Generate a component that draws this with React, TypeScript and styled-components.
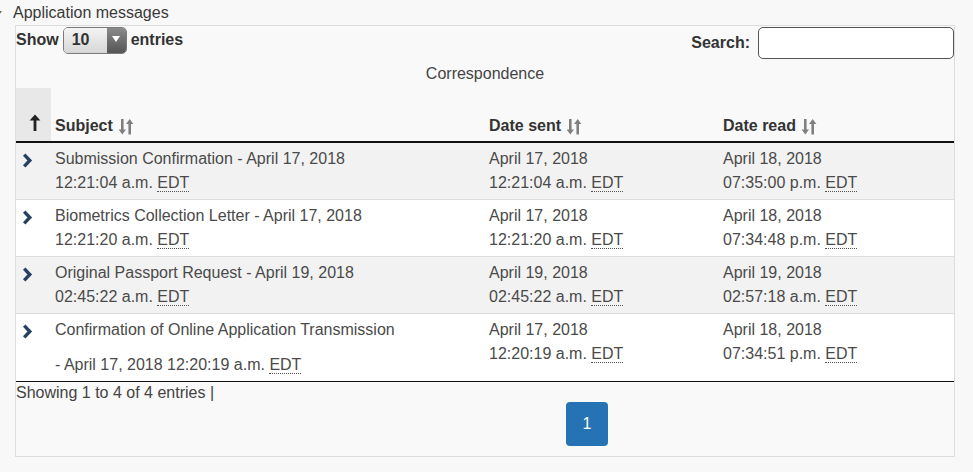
import styled, { createGlobalStyle } from 'styled-components';

const GlobalStyle = createGlobalStyle`
  body {
    margin: 0;
    background: #f8f8f8;
    font-family: 'Liberation Sans', Arial, sans-serif;
    color: #333;
  }
`;

const Legend = styled.div`
  position: relative;
  height: 25px;
  line-height: 26px;
  padding-left: 13px;
  font-size: 16px;
  color: #3a3a3a;

  &::before {
    content: '';
    position: absolute;
    left: -4px;
    top: 11px;
    border-left: 3px solid transparent;
    border-right: 3px solid transparent;
    border-top: 4px solid #666;
  }
`;

const Panel = styled.div`
  margin-left: 15px;
  width: 938px;
  border: 1px solid #ddd;
  background: #f9f9f9;
`;

const Toolbar = styled.div`
  display: flex;
  justify-content: space-between;
  align-items: flex-start;
  height: 36px;
`;

const Label = styled.label`
  display: flex;
  align-items: center;
  gap: 4px;
  font-weight: bold;
  font-size: 16px;
  color: #333;
`;

const ShowLabel = styled(Label)`
  height: 28px;
`;

const SearchLabel = styled(Label)`
  gap: 8px;
  margin-top: 1px;
`;

const Select = styled.div`
  display: flex;
  width: 64px;
  height: 27px;
  border: 1px solid #7a7a7a;
  border-radius: 5px;
  overflow: hidden;
  box-sizing: border-box;
`;

const SelectValue = styled.span`
  flex: 1;
  display: flex;
  align-items: center;
  padding-left: 8px;
  font-weight: bold;
  background: linear-gradient(#f4f4f4, #d6d6d6);
`;

const SelectArrow = styled.span`
  width: 19px;
  display: flex;
  align-items: center;
  justify-content: center;
  background: linear-gradient(#8a8a8a, #555);

  &::after {
    content: '';
    border-left: 4px solid transparent;
    border-right: 4px solid transparent;
    border-top: 6px solid #fff;
    margin-top: -2px;
  }
`;

const SearchInput = styled.input`
  width: 196px;
  height: 32px;
  box-sizing: border-box;
  border: 1px solid #555;
  border-radius: 5px;
  background: #fff;
`;

const Table = styled.table`
  width: 938px;
  border-collapse: collapse;
  table-layout: fixed;
  font-size: 16px;
`;

const Caption = styled.caption`
  height: 26px;
  line-height: 24px;
  color: #444;
  text-align: center;
`;

const HeadCell = styled.th<{ $toggle?: boolean }>`
  height: 54px;
  padding: 0 0 6px 4px;
  box-sizing: border-box;
  vertical-align: bottom;
  text-align: left;
  font-weight: bold;
  color: #333;
  border-bottom: 2px solid #111;
  background: ${(p) => (p.$toggle ? '#e8e8e8' : 'transparent')};
  padding-left: ${(p) => (p.$toggle ? '13px' : '4px')};
  white-space: nowrap;
`;

const HeadInner = styled.span`
  display: inline-flex;
  align-items: center;
  gap: 5px;
`;

const Row = styled.tr<{ $striped?: boolean }>`
  background: ${(p) => (p.$striped ? '#f2f2f2' : '#fff')};
  border-bottom: 1px solid #ddd;

  &:last-child {
    border-bottom: 1px solid #111;
  }
`;

const Cell = styled.td`
  padding: 4px;
  vertical-align: top;
  line-height: 24px;
  color: #4a4a4a;
`;

const ToggleCell = styled(Cell)`
  padding-left: 6px;
  padding-top: 8px;
`;

const Lead = styled.span<{ $gap?: boolean }>`
  display: block;
  margin-bottom: ${(p) => (p.$gap ? '11px' : '0')};
`;

const Abbr = styled.abbr`
  text-decoration: none;
  border-bottom: 1px dotted #555;
`;

const Footer = styled.div`
  font-size: 16px;
  color: #444;
`;

const Info = styled.div`
  line-height: 22px;
`;

const Pager = styled.div`
  display: flex;
  margin-top: -2px;
  padding: 0 0 10px 550px;
`;

const PageButton = styled.span`
  width: 42px;
  height: 44px;
  display: flex;
  align-items: center;
  justify-content: center;
  background: #2572b4;
  color: #fff;
  border-radius: 4px;
  font-size: 16px;
`;

const SortIcon = () => (
  <svg width="16" height="17" viewBox="0 0 16 17" fill="#808080">
    <path d="M3 1h2.6v10.5h2.4L4.3 16.5 0.6 11.5H3z" />
    <path d="M10.4 16.5h2.6V6h2.4L11.7 1 8 6h2.4z" />
  </svg>
);

const UpArrow = () => (
  <svg width="12" height="17" viewBox="0 0 12 17" fill="#222">
    <path d="M4.6 17h2.8V6.5h4L6 0.5 0.6 6.5h4z" />
  </svg>
);

const Chevron = () => (
  <svg width="11" height="15" viewBox="0 0 11 15">
    <path d="M2.2 1.6l5.6 5.9-5.6 5.9" fill="none" stroke="#284162" strokeWidth="3.4" />
  </svg>
);

const EDT = () => <Abbr title="Eastern Daylight Time">EDT</Abbr>;

type Msg = {
  subject: string;
  subjectTime: string;
  sentDate: string;
  sentTime: string;
  readDate: string;
  readTime: string;
  wrap?: boolean;
};

const messages: Msg[] = [
  {
    subject: 'Submission Confirmation - April 17, 2018',
    subjectTime: '12:21:04 a.m.',
    sentDate: 'April 17, 2018',
    sentTime: '12:21:04 a.m.',
    readDate: 'April 18, 2018',
    readTime: '07:35:00 p.m.',
  },
  {
    subject: 'Biometrics Collection Letter - April 17, 2018',
    subjectTime: '12:21:20 a.m.',
    sentDate: 'April 17, 2018',
    sentTime: '12:21:20 a.m.',
    readDate: 'April 18, 2018',
    readTime: '07:34:48 p.m.',
  },
  {
    subject: 'Original Passport Request - April 19, 2018',
    subjectTime: '02:45:22 a.m.',
    sentDate: 'April 19, 2018',
    sentTime: '02:45:22 a.m.',
    readDate: 'April 19, 2018',
    readTime: '02:57:18 a.m.',
  },
  {
    subject: 'Confirmation of Online Application Transmission',
    subjectTime: '- April 17, 2018 12:20:19 a.m.',
    sentDate: 'April 17, 2018',
    sentTime: '12:20:19 a.m.',
    readDate: 'April 18, 2018',
    readTime: '07:34:51 p.m.',
    wrap: true,
  },
];

export default function App() {
  return (
    <>
      <GlobalStyle />
      <Legend>Application messages</Legend>
      <Panel>
        <Toolbar>
          <ShowLabel>
            Show
            <Select>
              <SelectValue>10</SelectValue>
              <SelectArrow />
            </Select>
            entries
          </ShowLabel>
          <SearchLabel>
            Search:
            <SearchInput type="search" />
          </SearchLabel>
        </Toolbar>
        <Table>
          <colgroup>
            <col style={{ width: 35 }} />
            <col style={{ width: 434 }} />
            <col style={{ width: 234 }} />
            <col style={{ width: 235 }} />
          </colgroup>
          <Caption>Correspondence</Caption>
          <thead>
            <tr>
              <HeadCell $toggle>
                <UpArrow />
              </HeadCell>
              <HeadCell>
                <HeadInner>
                  Subject <SortIcon />
                </HeadInner>
              </HeadCell>
              <HeadCell>
                <HeadInner>
                  Date sent <SortIcon />
                </HeadInner>
              </HeadCell>
              <HeadCell>
                <HeadInner>
                  Date read <SortIcon />
                </HeadInner>
              </HeadCell>
            </tr>
          </thead>
          <tbody>
            {messages.map((m, i) => (
              <Row key={m.subject} $striped={i % 2 === 0}>
                <ToggleCell>
                  <Chevron />
                </ToggleCell>
                <Cell>
                  <Lead $gap={m.wrap}>{m.subject}</Lead>
                  {m.subjectTime} <EDT />
                </Cell>
                <Cell>
                  {m.sentDate}
                  <br />
                  {m.sentTime} <EDT />
                </Cell>
                <Cell>
                  {m.readDate}
                  <br />
                  {m.readTime} <EDT />
                </Cell>
              </Row>
            ))}
          </tbody>
        </Table>
        <Footer>
          <Info>Showing 1 to 4 of 4 entries |</Info>
          <Pager>
            <PageButton>1</PageButton>
          </Pager>
        </Footer>
      </Panel>
    </>
  );
}
